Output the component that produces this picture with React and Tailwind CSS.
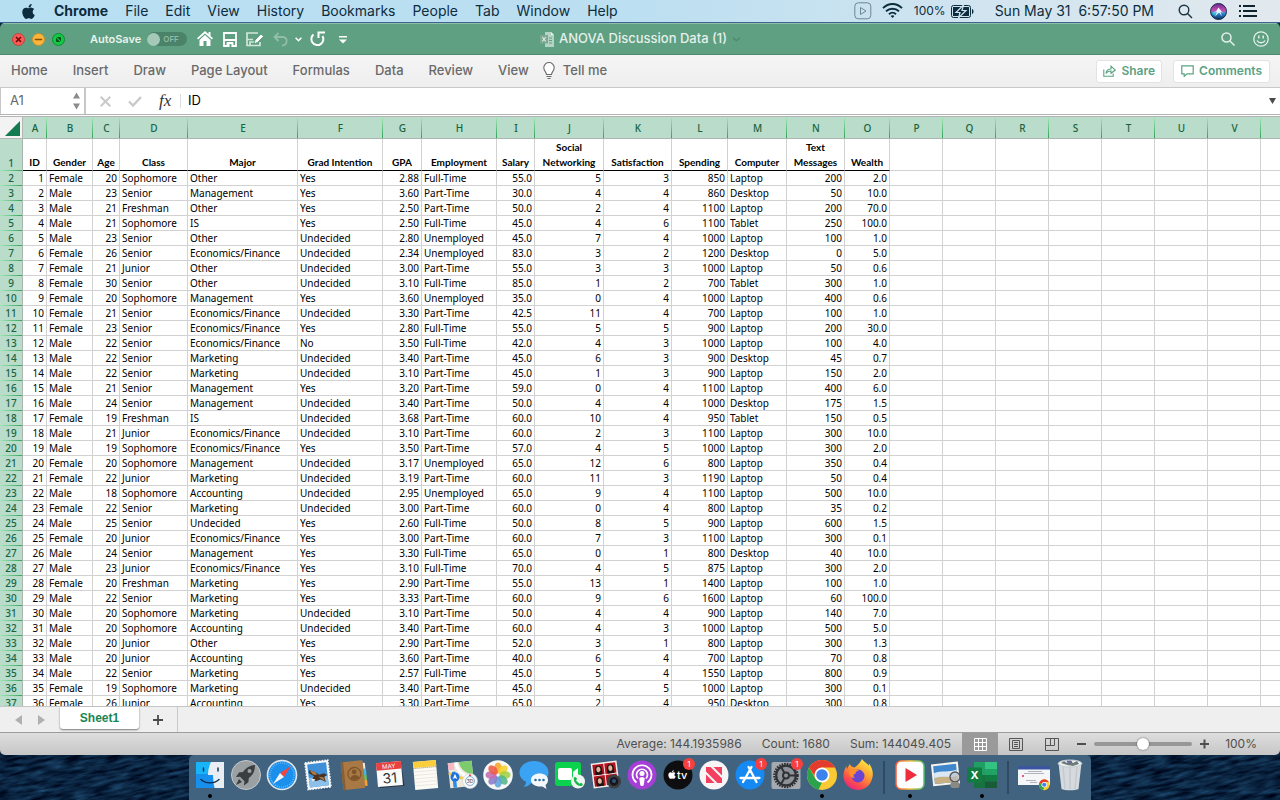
import { useState } from 'react'
import { FaApple } from 'react-icons/fa'

const MENUS = ['File', 'Edit', 'View', 'History', 'Bookmarks', 'People', 'Tab', 'Window', 'Help']
const TABS = ['Home', 'Insert', 'Draw', 'Page Layout', 'Formulas', 'Data', 'Review', 'View']

const COLUMNS = [
  { letter: 'A', title: 'ID', width: 24, num: true },
  { letter: 'B', title: 'Gender', width: 46 },
  { letter: 'C', title: 'Age', width: 27, num: true },
  { letter: 'D', title: 'Class', width: 68 },
  { letter: 'E', title: 'Major', width: 110 },
  { letter: 'F', title: 'Grad Intention', width: 85 },
  { letter: 'G', title: 'GPA', width: 39, num: true },
  { letter: 'H', title: 'Employment', width: 75 },
  { letter: 'I', title: 'Salary', width: 38, num: true },
  { letter: 'J', title: 'Social Networking', width: 69, num: true },
  { letter: 'K', title: 'Satisfaction', width: 68, num: true },
  { letter: 'L', title: 'Spending', width: 56, num: true },
  { letter: 'M', title: 'Computer', width: 59 },
  { letter: 'N', title: 'Text Messages', width: 58, num: true },
  { letter: 'O', title: 'Wealth', width: 45, num: true },
]
const EMPTY = ['P', 'Q', 'R', 'S', 'T', 'U', 'V', '']

const DATA = `1,Female,20,Sophomore,Other,Yes,2.88,Full-Time,55.0,5,3,850,Laptop,200,2.0
2,Male,23,Senior,Management,Yes,3.60,Part-Time,30.0,4,4,860,Desktop,50,10.0
3,Male,21,Freshman,Other,Yes,2.50,Part-Time,50.0,2,4,1100,Laptop,200,70.0
4,Male,21,Sophomore,IS,Yes,2.50,Full-Time,45.0,4,6,1100,Tablet,250,100.0
5,Male,23,Senior,Other,Undecided,2.80,Unemployed,45.0,7,4,1000,Laptop,100,1.0
6,Female,26,Senior,Economics/Finance,Undecided,2.34,Unemployed,83.0,3,2,1200,Desktop,0,5.0
7,Female,21,Junior,Other,Undecided,3.00,Part-Time,55.0,3,3,1000,Laptop,50,0.6
8,Female,30,Senior,Other,Undecided,3.10,Full-Time,85.0,1,2,700,Tablet,300,1.0
9,Female,20,Sophomore,Management,Yes,3.60,Unemployed,35.0,0,4,1000,Laptop,400,0.6
10,Female,21,Senior,Economics/Finance,Undecided,3.30,Part-Time,42.5,11,4,700,Laptop,100,1.0
11,Female,23,Senior,Economics/Finance,Yes,2.80,Full-Time,55.0,5,5,900,Laptop,200,30.0
12,Male,22,Senior,Economics/Finance,No,3.50,Full-Time,42.0,4,3,1000,Laptop,100,4.0
13,Male,22,Senior,Marketing,Undecided,3.40,Part-Time,45.0,6,3,900,Desktop,45,0.7
14,Male,22,Senior,Marketing,Undecided,3.10,Part-Time,45.0,1,3,900,Laptop,150,2.0
15,Male,21,Senior,Management,Yes,3.20,Part-Time,59.0,0,4,1100,Laptop,400,6.0
16,Male,24,Senior,Management,Undecided,3.40,Part-Time,50.0,4,4,1000,Desktop,175,1.5
17,Female,19,Freshman,IS,Undecided,3.68,Part-Time,60.0,10,4,950,Tablet,150,0.5
18,Male,21,Junior,Economics/Finance,Undecided,3.10,Part-Time,60.0,2,3,1100,Laptop,300,10.0
19,Male,19,Sophomore,Economics/Finance,Yes,3.50,Part-Time,57.0,4,5,1000,Laptop,300,2.0
20,Female,20,Sophomore,Management,Undecided,3.17,Unemployed,65.0,12,6,800,Laptop,350,0.4
21,Female,22,Junior,Marketing,Undecided,3.19,Part-Time,60.0,11,3,1190,Laptop,50,0.4
22,Male,18,Sophomore,Accounting,Undecided,2.95,Unemployed,65.0,9,4,1100,Laptop,500,10.0
23,Female,22,Senior,Marketing,Undecided,3.00,Part-Time,60.0,0,4,800,Laptop,35,0.2
24,Male,25,Senior,Undecided,Yes,2.60,Full-Time,50.0,8,5,900,Laptop,600,1.5
25,Female,20,Junior,Economics/Finance,Yes,3.00,Part-Time,60.0,7,3,1100,Laptop,300,0.1
26,Male,24,Senior,Management,Yes,3.30,Full-Time,65.0,0,1,800,Desktop,40,10.0
27,Male,23,Junior,Economics/Finance,Yes,3.10,Full-Time,70.0,4,5,875,Laptop,300,2.0
28,Female,20,Freshman,Marketing,Yes,2.90,Part-Time,55.0,13,1,1400,Laptop,100,1.0
29,Male,22,Senior,Marketing,Yes,3.33,Part-Time,60.0,9,6,1600,Laptop,60,100.0
30,Male,20,Sophomore,Marketing,Undecided,3.10,Part-Time,50.0,4,4,900,Laptop,140,7.0
31,Male,20,Sophomore,Accounting,Undecided,3.40,Part-Time,60.0,4,3,1000,Laptop,500,5.0
32,Male,20,Junior,Other,Yes,2.90,Part-Time,52.0,3,1,800,Laptop,300,1.3
33,Male,20,Junior,Accounting,Yes,3.60,Part-Time,40.0,6,4,700,Laptop,70,0.8
34,Male,22,Senior,Marketing,Yes,2.57,Full-Time,45.0,5,4,1550,Laptop,800,0.9
35,Female,19,Sophomore,Marketing,Undecided,3.40,Part-Time,45.0,4,5,1000,Laptop,300,0.1
36,Female,26,Junior,Accounting,Yes,3.30,Part-Time,65.0,2,4,950,Desktop,300,0.8`
const ROWS = DATA.split('\n').map(line => line.split(','))

/* ---------- menu bar ---------- */

function MenuBar() {
  return (
    <header className="flex h-[23px] shrink-0 items-center border-b border-[#3d6490] bg-linear-to-r from-[#b7dff2] via-[#bcdff1] to-[#e2e9ee] pr-[22px] pl-5 text-sm text-[#0d2c3e]">
      <button aria-label="Apple menu" className="mr-[17px]"><FaApple size={17} /></button>
      <nav className="flex items-center gap-[17px] leading-[22px]">
        <button className="font-bold">Chrome</button>
        {MENUS.map(m => <button key={m}>{m}</button>)}
      </nav>
      <div className="ml-auto flex items-center leading-[22px]">
        <svg width="18" height="18" viewBox="0 0 18 18" fill="none" stroke="#6c8797" className="mr-2.5">
          <rect x="0.8" y="0.8" width="16" height="16" rx="3.5" />
          <path d="M6.500 5.500v7l5.500-3.500z" />
        </svg>
        <svg width="21" height="16" viewBox="0 0 21 16" fill="none" stroke="#0d2c3e" strokeWidth="1.900" className="mr-[11px]">
          <path d="M1 5.200C6.500-0.300 14.500-0.300 20 5.200" />
          <path d="M4 8.300c3.700-3.500 9.300-3.500 13 0" />
          <path d="M7 11.200c2-1.900 5-1.900 7 0" />
          <path d="M8.600 13l1.900 2 1.900-2c-1-1-2.800-1-3.800 0z" fill="#0d2c3e" stroke="none" />
        </svg>
        <span className="mr-[5px] text-xs">100%</span>
        <svg width="23" height="13" viewBox="0 0 23 13" className="mr-[21px]">
          <rect x="0.500" y="0.500" width="19" height="12" rx="2" fill="none" stroke="#0d2c3e" />
          <rect x="2" y="2" width="16" height="9" fill="#0d2c3e" />
          <path d="M21 4c2 .6 2 4.400 0 5z" fill="#0d2c3e" />
          <path d="M12.500 0L5 7.500h4L7.500 13 15 5.500h-4z" fill="#0d2c3e" stroke="#cfe4ef" strokeWidth="1.200" />
        </svg>
        <span className="mr-6 whitespace-pre">Sun May 31  6:57:50 PM</span>
        <svg width="15" height="15" viewBox="0 0 15 15" fill="none" stroke="#1d3543" strokeWidth="1.400" className="mr-[17px]">
          <circle cx="6" cy="6" r="4.800" /><path d="M9.500 9.500l4.500 4.500" />
        </svg>
        <svg width="17" height="17" viewBox="0 0 17 17" className="mr-3">
          <defs>
            <linearGradient id="siri" x1="0" y1="0" x2="0" y2="1">
              <stop offset="0" stopColor="#6a2a92" /><stop offset="0.450" stopColor="#c94fae" /><stop offset="0.600" stopColor="#2f8fd6" /><stop offset="1" stopColor="#0b2a5c" />
            </linearGradient>
          </defs>
          <circle cx="8.500" cy="8.500" r="8" fill="url(#siri)" stroke="#182a44" />
          <path d="M8.500 4.500L12 9l2.500.5-4-.2 1.500 4-3-3.800L5 13.500 6.800 9.300l-4.300.9L6.300 8z" fill="#e7f6ff" />
          <path d="M2 10c2-2 4-1.500 5-1l-2 4z" fill="#3fd0e0" opacity=".7" />
        </svg>
        <svg width="19" height="12" viewBox="0 0 19 12" fill="#0d2430">
          <path d="M0 0h2v2H0zM4 0h12v2H4zM0 5h2v2H0zM4 5h14v2H4zM0 10h2v2H0zM4 10h14v2H4z" />
        </svg>
      </div>
    </header>
  )
}

/* ---------- window chrome ---------- */

function TitleBar({ autoSave, setAutoSave }) {
  return (
    <div className="grid h-8 shrink-0 grid-cols-[1fr_auto_1fr] items-center border-t border-b border-t-[#8fbfa6] border-b-[#4d8b6f] bg-[#5f9f82] pr-[11px] pl-3 text-white">
      <div className="flex items-center">
        <div className="mr-[25px] flex gap-[7px]">
          <button aria-label="Close" className="size-[13px]">
            <svg viewBox="0 0 13 13"><circle cx="6.500" cy="6.500" r="6" fill="#fb5a55" stroke="#c9403d" /><path d="M4 4l5 5M9 4l-5 5" stroke="#6b0a0a" strokeWidth="1.700" /></svg>
          </button>
          <button aria-label="Minimize" className="size-[13px]">
            <svg viewBox="0 0 13 13"><circle cx="6.500" cy="6.500" r="6" fill="#fdb63c" stroke="#cf8f2b" /><path d="M2.800 6.500h7.400" stroke="#8a4b05" strokeWidth="1.600" /></svg>
          </button>
          <button aria-label="Zoom" className="size-[13px]">
            <svg viewBox="0 0 13 13"><circle cx="6.500" cy="6.500" r="6" fill="#12c845" stroke="#118a34" /><path d="M4 8.500V4.800L8.200 9H4.500zM9 4.500v3.700L4.800 4h3.700z" fill="#06501a" /></svg>
          </button>
        </div>
        <label className="flex items-center gap-1.5 text-[11px] font-semibold text-[#e9f3ee]">
          AutoSave
          <input type="checkbox" checked={autoSave} onChange={e => setAutoSave(e.target.checked)} className="peer sr-only" />
          <span className="flex h-3.5 w-10 items-center gap-[3px] rounded-full bg-[#4b836a] text-[8px] font-semibold text-[#8fbaa5]">
            <span className="size-[13px] rounded-full bg-[#a5c9b8]" />
            {autoSave ? 'ON' : 'OFF'}
          </span>
        </label>
        <button aria-label="Home" className="ml-2.5">
          <svg width="16" height="16" viewBox="0 0 16 16" fill="#fff">
            <path d="M8 0L0 7.300l1.200 1.300L8 2.500l6.800 6.100L16 7.300l-2.500-2.200V1h-2v2.300z" />
            <path d="M2.500 9L8 4l5.500 5v6H9.500v-5h-3v5h-4z" />
          </svg>
        </button>
        <button aria-label="Save" className="ml-2.5">
          <svg width="14" height="15" viewBox="0 0 14 15" fill="none" stroke="#fff" strokeWidth="1.800">
            <path d="M1 1h12v13H1z" /><path d="M1 8h12" /><path d="M4 14.500v-4h6v4" fill="#fff" strokeWidth="1" /><path d="M7.500 12v3" stroke="#5f9f82" />
          </svg>
        </button>
        <button aria-label="Save as" className="ml-[9px]">
          <svg width="18" height="15" viewBox="0 0 18 15" fill="none" stroke="#d3e6dc" strokeWidth="1.700">
            <path d="M12 1H1v12.500h3V10h4M4 13.500h10V10M1 7.500h6" />
            <path d="M8 12l1-4 6-6 2.500 2.500-6 6z" fill="#fff" stroke="#5f9f82" strokeWidth="1" />
          </svg>
        </button>
        <button aria-label="Undo" className="ml-[9px]">
          <svg width="15" height="15" viewBox="0 0 15 15" fill="none" stroke="#93bfa9" strokeWidth="1.800">
            <path d="M5.500 1L1.500 5l4 4M1.500 5H10c5 0 5 8.500-1 8.500" />
          </svg>
        </button>
        <button aria-label="Undo history" className="ml-[7px]">
          <svg width="7" height="5" viewBox="0 0 7 5" fill="none" stroke="#fff" strokeWidth="1.600"><path d="M.6.8l2.900 2.900L6.400.8" /></svg>
        </button>
        <button aria-label="Redo" className="ml-2">
          <svg width="15" height="16" viewBox="0 0 15 16" fill="none" stroke="#fff" strokeWidth="2">
            <path d="M3.500 3.500A6 6 0 1 0 12.500 5" /><path d="M8.500 7V1.500H15" />
          </svg>
        </button>
        <button aria-label="Customize toolbar" className="ml-3.5">
          <svg width="8" height="9" viewBox="0 0 8 9" fill="#fff"><path d="M0 1h8v1.400H0zM0 4.500h8L4 8.500z" /></svg>
        </button>
      </div>
      <h1 className="flex items-center gap-[5px] text-[13px] font-medium text-[#e4f0ea]">
        <svg width="14" height="15" viewBox="0 0 14 15">
          <path d="M5 0h6l3 3v12H5z" fill="#b5d3c4" />
          <path d="M11 0v3h3" fill="#e6f1eb" />
          <path d="M9 6h3M9 8.500h3M9 11h3" stroke="#5f9f82" />
          <rect y="3" width="8" height="8.500" fill="#7fa894" />
          <path d="M2.300 5l3.400 4.400M5.700 5L2.300 9.400" stroke="#dcebe3" strokeWidth="1.100" />
        </svg>
        ANOVA Discussion Data (1)
        <svg width="9" height="5" viewBox="0 0 9 5" fill="none" stroke="#4c896d" strokeWidth="1.400"><path d="M1 .7l3.500 3L8 .7" /></svg>
      </h1>
      <div className="flex items-center justify-end gap-[18px]">
        <button aria-label="Search">
          <svg width="14" height="14" viewBox="0 0 14 14" fill="none" stroke="#e4f0ea" strokeWidth="1.500"><circle cx="5.500" cy="5.500" r="4.500" /><path d="M9 9l4.500 4.500" /></svg>
        </button>
        <button aria-label="Feedback">
          <svg width="16" height="16" viewBox="0 0 16 16" fill="none" stroke="#e4f0ea" strokeWidth="1.300">
            <circle cx="8" cy="8" r="7.200" /><path d="M4 9.500c1.500 3 6.500 3 8 0" /><path d="M5.800 4.500v3M10.200 4.500v3" strokeWidth="1.500" />
          </svg>
        </button>
      </div>
    </div>
  )
}

function Ribbon() {
  return (
    <div className="flex h-[33px] shrink-0 items-center border-b border-[#c9c9c9] bg-linear-to-b from-[#f5f5f5] to-[#eeeeee] pr-2.5 pl-[11px] text-[13px] font-medium text-[#6a6a6a]">
      <nav className="flex gap-[25px]">
        {TABS.map(t => <button key={t}>{t}</button>)}
      </nav>
      <button className="ml-3.5 flex items-center gap-2">
        <svg width="12" height="18" viewBox="0 0 12 18" fill="none" stroke="#6a6a6a" strokeWidth="1.100">
          <path d="M3.500 12.500c0-2.500-2.700-3.500-2.700-6.800a5.200 5.200 0 0 1 10.400 0c0 3.300-2.700 4.300-2.700 6.800z" fill="#fff" />
          <path d="M3.500 14.500h5M4.500 16.500h3" />
        </svg>
        Tell me
      </button>
      <div className="ml-auto flex gap-[11px] font-semibold text-[#5ba283]">
        <button className="flex h-[23px] items-center gap-[5px] rounded-[3px] border border-[#e3e3e3] bg-white px-1.5 text-xs">
          <svg width="13" height="12" viewBox="0 0 13 12" fill="none" stroke="#5ba283" strokeWidth="1.100">
            <path d="M.8 4.500v6.800h9.400V8.500" /><path d="M3 8.500c.3-3 2.200-4.500 5-4.500V1.200L12.300 5 8 8.300V6C6 6 4.200 6.600 3 8.500z" />
          </svg>
          Share
        </button>
        <button className="flex h-[23px] items-center gap-[5px] rounded-[3px] border border-[#e3e3e3] bg-white px-[7px] text-xs">
          <svg width="13" height="12" viewBox="0 0 13 12" fill="none" stroke="#5ba283" strokeWidth="1.200"><path d="M.8.800h11.400v8H6l-2.800 2.600V8.800H.8z" /></svg>
          Comments
        </button>
      </div>
    </div>
  )
}

function FormulaBar() {
  return (
    <div className="flex h-[29px] shrink-0 border-b-[3px] border-double border-[#b4b4b4] bg-white text-[13px]">
      <div className="flex w-[86px] items-center border-r-2 border-l border-[#c8c8c8]">
        <input aria-label="Name box" defaultValue="A1" className="w-[71px] bg-transparent pl-[9px] text-[#666] outline-none" />
        <svg width="9" height="18" viewBox="0 0 9 18" fill="#8b8b8b"><path d="M4.500 0.500L8 6.500H1zM4.500 17.500L1 11.500h7z" /></svg>
      </div>
      <div className="flex items-center">
        <button aria-label="Cancel" className="ml-3.5"><svg width="11" height="11" viewBox="0 0 11 11" stroke="#c9c9c9" strokeWidth="2"><path d="M.7.700l9.600 9.600M10.300.700L.7 10.300" /></svg></button>
        <button aria-label="Enter" className="ml-[17px]"><svg width="14" height="11" viewBox="0 0 14 11" fill="none" stroke="#c9c9c9" strokeWidth="2.400"><path d="M1 5.500l4 4L13 1" /></svg></button>
        <button aria-label="Insert function" className="ml-[17px] w-[21px] text-left font-['Liberation_Serif',serif] text-[17px] leading-5 text-[#333] italic">fx</button>
      </div>
      <input aria-label="Formula" defaultValue="ID" className="my-1.5 flex-1 border-l border-[#dcdcdc] bg-transparent pl-[7px] text-black outline-none" />
      <button aria-label="Expand formula bar" className="pr-1"><svg width="7" height="6" viewBox="0 0 7 6" fill="#4a4a4a"><path d="M0 0h7L3.500 6z" /></svg></button>
    </div>
  )
}

/* ---------- sheet ---------- */

function Sheet() {
  return (
    <main className="min-h-0 flex-1 overflow-hidden border-b border-[#c6c6c6] bg-white">
      <table className="w-[1314px] table-fixed border-separate border-spacing-0 font-['Noto_Sans',sans-serif] text-[10px] leading-[14px] text-black">
        <colgroup>
          <col className="w-[23px]" />
          {COLUMNS.map(c => <col key={c.letter} style={{ width: c.width }} />)}
          {EMPTY.map(l => <col key={l} className="w-[53px]" />)}
        </colgroup>
        <thead>
          <tr className="h-[22px] text-[#17643f]">
            <th aria-label="Select all" className="border-r border-b border-[#b5b5b5] bg-[#f3f3f3] p-0">
              <svg width="22" height="21" viewBox="0 0 22 21"><path d="M20 4v15H5z" fill="#147a50" /></svg>
            </th>
            {[...COLUMNS.map(c => c.letter), ...EMPTY].map(l => (
              <th key={l} scope="col" className="border-b border-[#a9b5ae] bg-[#b9dccb] bg-[linear-gradient(#a5e6b8,#32a35a)] bg-[length:1px_100%] bg-right bg-no-repeat p-0 font-medium">{l}</th>
            ))}
          </tr>
        </thead>
        <tbody>
          <tr className="h-8">
            <RowHeader n={1} />
            {COLUMNS.map(c => (
              <th key={c.letter} scope="col" className="border-r border-b border-r-[#d2d2d2] border-b-black p-0 align-bottom font-['Lato',sans-serif] leading-[15px] font-bold">{c.title}</th>
            ))}
            {EMPTY.map(l => <td key={l} className="border-r border-b border-[#d2d2d2] p-0" />)}
          </tr>
          {ROWS.map((row, r) => (
            <tr key={r} className="h-[15px]">
              <RowHeader n={r + 2} />
              {row.map((v, i) => (
                <td
                  key={i}
                  className={COLUMNS[i].num
                    ? 'border-r border-b border-[#d2d2d2] py-0 pr-0.5 pl-0 text-right whitespace-nowrap'
                    : 'border-r border-b border-[#d2d2d2] py-0 pr-0 pl-0.5 whitespace-nowrap'}
                >
                  {v}
                </td>
              ))}
              {EMPTY.map(l => <td key={l} className="border-r border-b border-[#d2d2d2] p-0" />)}
            </tr>
          ))}
        </tbody>
      </table>
    </main>
  )
}

function RowHeader({ n }) {
  return (
    <th scope="row" className="border-r border-[#a9b5ae] bg-[#b9dccb] bg-[linear-gradient(to_right,#a5e6b8,#32a35a)] bg-[length:100%_1px] bg-bottom bg-no-repeat p-0 align-bottom leading-[15px] font-medium text-[#17643f]">{n}</th>
  )
}

function SheetTabs() {
  return (
    <div className="flex h-[25px] shrink-0 bg-[#efefef]">
      <div className="flex w-[60px] items-center gap-4 pl-[15px]">
        <button aria-label="Previous sheet"><svg width="7" height="10" viewBox="0 0 7 10" fill="#b0b0b0"><path d="M7 0v10L0 5z" /></svg></button>
        <button aria-label="Next sheet"><svg width="7" height="10" viewBox="0 0 7 10" fill="#b0b0b0"><path d="M0 0v10l7-5z" /></svg></button>
      </div>
      <button className="h-[22px] w-[79px] rounded-b-[3px] bg-white font-['Liberation_Sans',sans-serif] text-xs font-bold text-[#1b8554] shadow-[0_1px_2px_rgba(0,0,0,0.5)]">Sheet1</button>
      <button aria-label="Add sheet" className="flex w-[39px] items-center justify-center border-r border-[#c9c9c9]">
        <svg width="10" height="10" viewBox="0 0 10 10" stroke="#4a4a4a" strokeWidth="1.800"><path d="M5 0v10M0 5h10" /></svg>
      </button>
    </div>
  )
}

function StatusBar({ zoom, setZoom }) {
  return (
    <div className="flex h-[23px] shrink-0 items-center justify-end border-t border-[#9c9c9c] bg-linear-to-b from-[#dedede] to-[#c6c6c6] pr-[23px] text-xs text-[#4f4f4f]">
      <span className="mr-5">Average: 144.1935986</span>
      <span className="mr-5">Count: 1680</span>
      <span className="mr-[11px]">Sum: 144049.405</span>
      <button aria-label="Normal view" className="flex h-full w-9 items-center justify-center bg-[#9a9a9a]">
        <svg width="13" height="13" viewBox="0 0 13 13" fill="none" stroke="#fff"><path d="M.5.500h12v12H.5zM.5 4.500h12M.5 8.500h12M4.500.500v12M8.500.500v12" /></svg>
      </button>
      <button aria-label="Page layout view" className="flex w-9 justify-center">
        <svg width="14" height="13" viewBox="0 0 14 13" fill="none" stroke="#555"><path d="M.5.500h13v12H.5zM3.500 2.500h7v8h-7zM5 4.500h4M5 6.500h4M5 8.500h4" /></svg>
      </button>
      <button aria-label="Page break view" className="flex w-9 justify-center">
        <svg width="14" height="13" viewBox="0 0 14 13" fill="none" stroke="#555"><path d="M.5.500h13v12H.5zM5.500.500v7M9.500.500v7M.5 7.500h9" /></svg>
      </button>
      <button aria-label="Zoom out" className="ml-[7px]"><svg width="9" height="10" viewBox="0 0 9 10"><path d="M0 5h9" stroke="#4f4f4f" strokeWidth="2" /></svg></button>
      <input
        type="range" min="0" max="200" value={zoom} aria-label="Zoom level"
        onChange={e => setZoom(Number(e.target.value))}
        className="mx-2 h-1 w-[98px] appearance-none rounded-full bg-[#979797] [&::-webkit-slider-thumb]:size-3 [&::-webkit-slider-thumb]:appearance-none [&::-webkit-slider-thumb]:rounded-full [&::-webkit-slider-thumb]:bg-white [&::-webkit-slider-thumb]:shadow-[0_0_2px_rgba(0,0,0,0.6)]"
      />
      <button aria-label="Zoom in"><svg width="9" height="10" viewBox="0 0 9 10"><path d="M0 5h9M4.500.500v9" stroke="#4f4f4f" strokeWidth="2" /></svg></button>
      <span className="w-12 text-right">{zoom}%</span>
    </div>
  )
}

/* ---------- dock ---------- */

const Badge = () => (
  <g>
    <circle cx="27" cy="5" r="6" fill="#f5403f" />
    <text x="27" y="8" textAnchor="middle" fontSize="8" fill="#fff">1</text>
  </g>
)

const Finder = () => (
  <g>
    <rect x="2" y="3" width="28" height="26" fill="#e9eef5" />
    <path d="M2 3h15c-2 4-3 8-3 13h5c0 5 .2 9 1.500 13H2z" fill="#18b4f8" />
    <path d="M2 15h12v1h5l.5 7 1 6H2z" fill="#1577e6" opacity=".6" />
    <path d="M9.500 9v3M24 9v3M7 20.500c5 4.500 13 4.500 18 0" fill="none" stroke="#0c2a48" strokeWidth="1.400" strokeLinecap="round" />
  </g>
)

const Launchpad = () => (
  <g>
    <circle cx="16" cy="16" r="14.500" fill="#9ba1a3" stroke="#c5cacc" />
    <path d="M25 6c-6 .5-9 3-12 7l-4 .5L6 18l4-.3 4.500 4.500-.6 4.300 4.500-3.200.4-4.200C23 16 25 12 25 6zM9 20l-3 6 6-3z" fill="#3a3e40" />
    <circle cx="19.500" cy="12" r="2" fill="#9ba1a3" />
  </g>
)

const Safari = () => (
  <g>
    <circle cx="16" cy="16" r="14.500" fill="#1b8fec" stroke="#dfe6ea" strokeWidth="1.600" />
    <circle cx="16" cy="16" r="12" fill="none" stroke="#8fd0ff" strokeWidth="1.500" strokeDasharray=".6 1.500" />
    <path d="M25 7L14 14l4 4z" fill="#f5433d" /><path d="M7 25l7-11 4 4z" fill="#f2f5f7" />
  </g>
)

const Mail = () => (
  <g>
    <circle cx="23" cy="24" r="7" fill="#23466a" opacity=".5" />
    <g transform="rotate(-7 15 16)">
      <rect x="4.500" y="2.500" width="23" height="27" fill="#f6f8fa" stroke="#f6f8fa" strokeWidth="1.600" strokeDasharray="1.600 1.200" />
      <rect x="6.500" y="4.500" width="19" height="23" fill="#3f8fd8" />
      <path d="M6.500 18h19v9.500h-19z" fill="#8cc0ea" />
      <path d="M8 10l6 3 3 3 5-1 3 2-3 2 1 5-5-3-5 1-3-3 2-2-5-4z" fill="#4a3322" />
      <path d="M8 10l6 3 1 3-4-1zM16 18l5 1 1 4z" fill="#b07a45" /><path d="M9 19l4 1-3 2z" fill="#f3ede2" />
    </g>
  </g>
)

const Contacts = () => (
  <g transform="rotate(-6 16 16)">
    <path d="M25 5h3v6h-3z" fill="#e9e9e9" /><path d="M25 11h3.500v6H25z" fill="#49b6e8" /><path d="M25 17h3.500v5H25z" fill="#62c267" /><path d="M25 22h3.500v6H25z" fill="#f3a32f" />
    <rect x="4" y="2" width="22" height="28" rx="1.500" fill="#a87945" /><path d="M4 2h2.500v28H4z" fill="#8a5f31" />
    <circle cx="16.500" cy="15" r="6.500" fill="none" stroke="#805629" strokeWidth="1.300" />
    <circle cx="16.500" cy="13" r="2.400" fill="#805629" /><path d="M12 19c1-4 8-4 9 0-2 2.500-7 2.500-9 0z" fill="#805629" />
  </g>
)

const Calendar = () => (
  <g transform="rotate(-5 16 16)">
    <path d="M3 4h25l1.500 24H5z" fill="#2a3642" />
    <rect x="3" y="3" width="25" height="24" fill="#fafafa" /><rect x="3" y="3" width="25" height="7.500" fill="#e8413f" />
    <text x="15.500" y="9.300" textAnchor="middle" fontSize="6" fill="#fff">MAY</text>
    <text x="15.500" y="24" textAnchor="middle" fontSize="14" fill="#333">31</text>
  </g>
)

const Notes = () => (
  <g transform="rotate(-5 16 16)">
    <rect x="4" y="2" width="23" height="28" fill="#fbfaf5" /><rect x="4" y="2" width="23" height="6" fill="#fbcf3c" />
    <path d="M4 8.500h23" stroke="#a98a3a" strokeDasharray="1 1" />
    <path d="M4 12h23M4 15.500h23M4 19h23M4 22.500h23M4 26h23" stroke="#e3e1d8" strokeWidth=".7" />
  </g>
)

const Maps = () => (
  <g>
    <g transform="rotate(-6 15 16)">
      <rect x="3" y="3" width="24" height="25" fill="#efe9dc" /><path d="M14 3h13v14C20 15 15 10 14 3z" fill="#7ccb6c" />
      <path d="M3 3h6v7H3z" fill="#f7b8c5" /><path d="M11 3c1 9 7 15 16 17" fill="none" stroke="#fff" strokeWidth="3" />
      <path d="M3 13l24 12" stroke="#f7c948" strokeWidth="2.500" /><path d="M8 12v16" stroke="#2d8ce8" strokeWidth="3.500" />
    </g>
    <circle cx="9" cy="18" r="4.500" fill="#1d74dc" /><path d="M9 14.800l2.300 5.200-2.300-1-2.300 1z" fill="#fff" />
    <circle cx="24" cy="22" r="7.500" fill="#f4f6f8" stroke="#cdd3d8" strokeWidth=".6" />
    <circle cx="24" cy="22" r="4.500" fill="none" stroke="#6b9fc4" strokeWidth=".8" />
    <text x="24" y="24" textAnchor="middle" fontSize="5" fill="#445">3D</text><path d="M24 14.500l1.200 2.500h-2.400z" fill="#e33" />
  </g>
)

const PETALS = ['#f8a62a', '#f4d32c', '#a3cf46', '#52b788', '#5aa4dc', '#8b7cc6', '#c46ab0', '#ee5a45']
const Photos = () => (
  <g>
    <circle cx="16" cy="16" r="14.800" fill="#f7f7f5" />
    {PETALS.map((c, i) => <ellipse key={c} cx="16" cy="9" rx="3.800" ry="5.500" fill={c} opacity=".88" transform={`rotate(${i * 45} 16 16)`} />)}
  </g>
)

const Messages = () => (
  <g>
    <path d="M16 2C8 2 1.500 7 1.500 13.500c0 4 2.500 7.500 6.500 9.300 0 2-1 3.700-2.500 5 3 0 5.500-1 7.500-3.500C22 25 30.500 21 30.500 13.500 30.500 7 24 2 16 2z" fill="#3ba3f4" />
    <path d="M21.500 14.500c5 0 8.500 2.500 8.500 6.500 0 2-1 4-2.500 5l1 4-4-2.600c-6.500.8-11.500-2-11.500-6.400 0-4 4-6.500 8.500-6.500z" fill="#f4f8fb" />
    <circle cx="17.500" cy="21" r="1.300" fill="#2f6fa8" /><circle cx="21.500" cy="21" r="1.300" fill="#2f6fa8" /><circle cx="25.500" cy="21" r="1.300" fill="#2f6fa8" />
  </g>
)

const FaceTime = () => (
  <g>
    <rect x="1" y="3" width="26" height="24" rx="3" fill="#0bd24c" />
    <rect x="4" y="9" width="14" height="12" rx="2" fill="#fff" /><path d="M19 13l5-4v12l-5-4z" fill="#fff" />
    <circle cx="24" cy="22.500" r="7" fill="#f1f5f2" />
    <path d="M20 18.500c1.500-1.500 2.500 0 3 1.500l-1 1.500 3.500 3.200 1.500-1c2 .8 2.500 2 1 3-4 2-9.500-4.500-8-8.200z" fill="#14b948" />
  </g>
)

const PhotoBooth = () => (
  <g>
    <g transform="rotate(-7 15 15)">
      <rect x="2" y="3" width="26" height="25" fill="#f2eeee" />
      {[3.500, 15.500].map(x => [4.500, 16].map(y => (
        <g key={`${x}-${y}`}>
          <rect x={x} y={y} width="11" height="10.500" fill="#b3141f" />
          <path d={`M${x + 2} ${y + 10.500}v-5a3.500 4 0 0 1 7 0v5z`} fill="#1c1214" />
          <ellipse cx={x + 5.500} cy={y + 5.300} rx="2.100" ry="2.800" fill="#e2b598" />
        </g>
      )))}
    </g>
    <circle cx="24" cy="22.500" r="7" fill="#3b3d41" /><circle cx="24" cy="22.500" r="4.300" fill="#14161c" /><circle cx="24" cy="22" r="2" fill="#34507c" />
  </g>
)

const Podcasts = () => (
  <g>
    <circle cx="16" cy="16" r="14.500" fill="#a63fd6" />
    <g fill="none" stroke="#fff" strokeWidth="1.700">
      <path d="M10.500 23.500a9.500 9.500 0 1 1 11 0" /><path d="M12 19.500a5.500 5.500 0 1 1 8 0" />
    </g>
    <circle cx="16" cy="14.500" r="2.500" fill="#fff" /><path d="M13.300 19.500c.5-1.800 4.900-1.800 5.400 0l-1 6.500c-.4 1.300-3 1.300-3.400 0z" fill="#fff" />
  </g>
)

const AppleTV = () => (
  <g>
    <circle cx="16" cy="16" r="14.500" fill="#0e0e10" />
    <FaApple x="5" y="10.500" size={10} color="#fff" />
    <text x="15" y="19.500" fontSize="11" fontWeight="500" fill="#fff">tv</text>
    <Badge />
  </g>
)

const News = () => (
  <g>
    <circle cx="16" cy="16" r="14.500" fill="#f7f5f6" />
    <rect x="8" y="8" width="16" height="16" fill="#f3405f" />
    <path d="M6.500 12.500l13 13M12.500 6.500l13 13" stroke="#f7f5f6" strokeWidth="2" />
  </g>
)

const AppStore = () => (
  <g>
    <circle cx="16" cy="16" r="14.500" fill="#1789f2" />
    <path d="M17.500 8L10 21.500M14.500 8L22.500 23M6.500 19h12.500M22 19h3.500M9 23l.8-1.400" stroke="#fff" strokeWidth="2.300" strokeLinecap="round" />
    <Badge />
  </g>
)

const Settings = () => (
  <g>
    <rect x="1.500" y="3" width="29" height="27" rx="2" fill="#a5aab0" />
    <circle cx="16" cy="16.500" r="11.500" fill="none" stroke="#2c2e32" strokeWidth="2.500" strokeDasharray="1.600 1" />
    <circle cx="16" cy="16.500" r="9.800" fill="#8d9298" stroke="#303236" strokeWidth="2.200" />
    <circle cx="16" cy="16.500" r="3" fill="none" stroke="#303236" strokeWidth="2" />
    <path d="M19 16.500h7M14.500 14L11 8M14.500 19L11 25" stroke="#303236" strokeWidth="2" />
    <Badge />
  </g>
)

const ChromeMark = () => (
  <g>
    <circle cx="16" cy="16" r="15" fill="#fbc934" />
    <path d="M3 8.500L9.500 19.800 16 23.500 12.500 30.600A15 15 0 0 1 3 8.500z" fill="#2ba24c" />
    <path d="M3 8.500A15 15 0 0 1 29 8.500H16L10 19z" fill="#e33b2e" />
    <circle cx="16" cy="16" r="7.500" fill="#fff" /><circle cx="16" cy="16" r="5.800" fill="#3b82ee" />
  </g>
)

const Firefox = () => (
  <g>
    <defs>
      <linearGradient id="fox" x1=".8" y1="0" x2=".2" y2="1">
        <stop offset="0" stopColor="#fff04a" /><stop offset=".4" stopColor="#ffa02e" /><stop offset=".75" stopColor="#fb4a4e" /><stop offset="1" stopColor="#e0218a" />
      </linearGradient>
    </defs>
    <path d="M20 0c2 3 5 4 7 7 0-1 0-2-.4-3C30 8 31.500 13 30.500 18 29 26 23 31 16 31 8 31 1.500 25 1.500 17c0-4 1-7 3-10 0 1 .2 2 .6 3C6 8 7 6.500 7.500 5c1 1.500 2.500 3 5 3.500C15 7 18 4 20 0z" fill="url(#fox)" />
    <circle cx="16" cy="17" r="6.500" fill="#6a45d4" /><path d="M8 11c4-2 7-1 9 1-3 0-4 1-3 2.500-3 0-3 3-1 4.500-5 0-7-4-5-8z" fill="#ff8f2b" />
  </g>
)

const Player = () => (
  <g>
    <defs><linearGradient id="play"><stop offset="0" stopColor="#fb5a3c" /><stop offset=".5" stopColor="#f9c84a" /><stop offset="1" stopColor="#4fc26a" /></linearGradient></defs>
    <rect x="2" y="2" width="28" height="28" rx="5" fill="#fefefe" stroke="url(#play)" strokeWidth="1.500" />
    <path d="M11.500 9v14L23 16z" fill="#ee2c3c" />
  </g>
)

const Preview = () => (
  <g>
    <g transform="rotate(-6 15 15)">
      <rect x="2" y="4" width="27" height="22" fill="#f5f4ef" /><rect x="4" y="6" width="23" height="18" fill="#3f86cd" />
      <path d="M4 13c8-2 15 1 23-1v7H4z" fill="#d9e8f2" /><path d="M4 18c9-2 16 2 23 0v6H4z" fill="#c8b083" />
    </g>
    <circle cx="25" cy="18" r="5" fill="#b8c1c9" fillOpacity=".7" stroke="#55585d" strokeWidth="1.400" />
    <rect x="20.500" y="23" width="9" height="6" rx="2" fill="#8a8a85" />
  </g>
)

const ExcelIcon = () => (
  <g>
    <rect x="8" y="3" width="12" height="13" fill="#1f9f63" /><rect x="19" y="3" width="12" height="7" fill="#33c481" />
    <rect x="19" y="10" width="12" height="6.500" fill="#21a366" /><rect x="8" y="16" width="12" height="13" fill="#16733f" /><rect x="19" y="16" width="12" height="6.500" fill="#107c41" /><rect x="19" y="22.500" width="12" height="6.500" fill="#185c37" />
    <rect x="1" y="8.500" width="15" height="15" rx="1" fill="#107c41" />
    <text x="8.500" y="20" textAnchor="middle" fontSize="11" fontWeight="700" fill="#fff">X</text>
  </g>
)

const Minimized = () => (
  <g>
    <rect x="0" y="7" width="32" height="19" fill="#f5f6f8" /><rect x="0" y="7" width="32" height="3.500" fill="#3b55a0" />
    <path d="M10 12.500h14M6 14.500h20M8 21.500h10M12 23.500h7" stroke="#a9adb5" strokeWidth=".9" /><circle cx="5" cy="17" r="1" fill="#e26" />
    <g transform="translate(20.500 20) scale(.36)"><ChromeMark /></g>
  </g>
)

const Trash = () => (
  <g>
    <path d="M4.500 4h23l-3 26c-3 1.700-14 1.700-17 0z" fill="#d6dade" /><path d="M9 8l2 22M16 8v22M23 8l-2 22" stroke="#c4c9ce" strokeWidth="1.500" />
    <ellipse cx="16" cy="4.500" rx="11.800" ry="3.500" fill="#eef0f2" stroke="#c5cacf" />
    <path d="M7 4l3-2 3 2 3-3 3 3 4-2 2 3-6 2-6-1z" fill="#6e7f77" /><path d="M13 2l2 3 3-2zM21 3l2 2" fill="#c45b48" stroke="#4a6db0" />
  </g>
)

const DOCK = [
  { name: 'Finder', Icon: Finder, running: true },
  { name: 'Launchpad', Icon: Launchpad },
  { name: 'Safari', Icon: Safari },
  { name: 'Mail', Icon: Mail },
  { name: 'Contacts', Icon: Contacts },
  { name: 'Calendar', Icon: Calendar },
  { name: 'Notes', Icon: Notes },
  { name: 'Maps', Icon: Maps },
  { name: 'Photos', Icon: Photos },
  { name: 'Messages', Icon: Messages },
  { name: 'FaceTime', Icon: FaceTime },
  { name: 'Photo Booth', Icon: PhotoBooth },
  { name: 'Podcasts', Icon: Podcasts },
  { name: 'TV', Icon: AppleTV },
  { name: 'News', Icon: News },
  { name: 'App Store', Icon: AppStore },
  { name: 'System Preferences', Icon: Settings },
  { name: 'Google Chrome', Icon: ChromeMark, running: true },
  { name: 'Firefox', Icon: Firefox },
  null,
  { name: 'Player', Icon: Player, running: true },
  { name: 'Preview', Icon: Preview },
  { name: 'Excel', Icon: ExcelIcon, running: true },
  null,
  { name: 'Minimized window', Icon: Minimized },
  { name: 'Trash', Icon: Trash },
]

function Dock() {
  return (
    <footer className="relative flex h-[45px] shrink-0 justify-center">
      <svg aria-hidden="true" className="absolute inset-x-0 bottom-0 h-[52px] w-full">
        <filter id="water" x="0" y="0" width="100%" height="100%" colorInterpolationFilters="sRGB">
          <feTurbulence type="fractalNoise" baseFrequency="0.05 0.3" numOctaves="3" seed="4" />
          <feColorMatrix values="0.2 0 0 0 -0.06  0.4 0 0 0 -0.06  0.5 0 0 0 0  0 0 0 0 1" />
        </filter>
        <rect x="-40" y="-240" width="1400" height="560" filter="url(#water)" transform="rotate(-12)" />
      </svg>
      <nav aria-label="Dock" className="relative flex rounded-t-[5px] bg-[#41637f] px-[3px] pt-1">
        {DOCK.map((app, i) => app ? (
          <button key={app.name} aria-label={app.name} className="flex w-9 flex-col items-center gap-[3px]">
            <svg width="32" height="32" viewBox="0 0 32 32" className="overflow-visible"><app.Icon /></svg>
            {app.running && <span className="size-1 rounded-full bg-black" />}
          </button>
        ) : (
          <span key={i} className="mx-[7px] mt-0.5 h-[33px] w-0.5 bg-[#2f4a62]" />
        ))}
      </nav>
    </footer>
  )
}

export default function App() {
  const [autoSave, setAutoSave] = useState(false)
  const [zoom, setZoom] = useState(100)

  return (
    <div className="flex h-screen flex-col overflow-hidden bg-[#0a2742] font-['Inter',sans-serif]">
      <MenuBar />
      <div className="relative z-10 flex min-h-0 flex-1 flex-col overflow-hidden rounded-t-[5px] rounded-b-[5px]">
        <TitleBar autoSave={autoSave} setAutoSave={setAutoSave} />
        <Ribbon />
        <FormulaBar />
        <Sheet />
        <SheetTabs />
        <StatusBar zoom={zoom} setZoom={setZoom} />
      </div>
      <Dock />
    </div>
  )
}
